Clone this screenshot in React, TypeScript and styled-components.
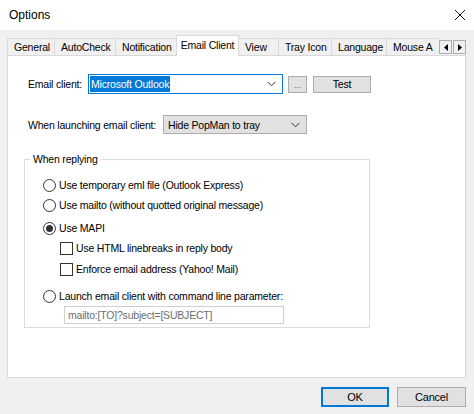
import React from "react";
import styled, { createGlobalStyle } from "styled-components";

const Global = createGlobalStyle`
  html, body { margin: 0; padding: 0; background: #f0f0f0; }
  body { font-family: "Liberation Sans", Arial, sans-serif; font-size: 10.5px; letter-spacing: -0.2px; color: #000; }
  * { box-sizing: border-box; }
`;

const Window = styled.div`
  width: 474px;
  height: 414px;
  display: flex;
  flex-direction: column;
  background: #f0f0f0;
  overflow: hidden;
`;

const TitleBar = styled.div`
  height: 30px;
  background: #fff;
  display: flex;
  align-items: center;
  justify-content: space-between;
  padding: 0 8px 0 9px;
  font-size: 12px;
  letter-spacing: 0;
`;

const Body = styled.div`
  flex: 1;
  display: flex;
  flex-direction: column;
  padding: 5px 8px 0 7px;
`;

const TabStrip = styled.div`
  display: flex;
  align-items: flex-end;
  height: 21px;
  position: relative;
  z-index: 1;
  margin-bottom: -1px;
`;

const TabList = styled.div`
  display: flex;
  align-items: flex-end;
  flex: 1;
  overflow: hidden;
  height: 21px;
`;

const Tab = styled.div<{ $w: number; $active?: boolean }>`
  flex: 0 0 ${(p) => p.$w}px;
  height: ${(p) => (p.$active ? 21 : 18)}px;
  background: ${(p) => (p.$active ? "#fff" : "#f0f0f0")};
  border: 1px solid #d9d9d9;
  border-bottom: ${(p) => (p.$active ? "none" : "1px solid #d9d9d9")};
  margin-left: -1px;
  display: flex;
  align-items: ${(p) => (p.$active ? "flex-start" : "center")};
  padding-top: ${(p) => (p.$active ? 3 : 0)}px;
  justify-content: ${(p) => (p.$active ? "center" : "flex-start")};
  padding-left: ${(p) => (p.$active ? 0 : 6)}px;
  white-space: nowrap;
  overflow: hidden;
  &:first-child { margin-left: 0; }
`;

const Scroller = styled.div`
  display: flex;
  gap: 1px;
  align-self: center;
  margin-top: 3px;
`;

const ScrollBtn = styled.div`
  width: 13px;
  height: 14px;
  background: #f0f0f0;
  border: 1px solid #adadad;
  display: flex;
  align-items: center;
  justify-content: center;
`;

const Panel = styled.div`
  height: 323px;
  background: #fff;
  border: 1px solid #d9d9d9;
  display: flex;
  flex-direction: column;
  padding: 18px 0 0 16px;
`;

const Row = styled.div<{ $mt?: number }>`
  display: flex;
  align-items: center;
  margin-top: ${(p) => p.$mt ?? 0}px;
  padding-left: 4px;
`;

const Label = styled.span<{ $w: number }>`
  width: ${(p) => p.$w}px;
  flex: 0 0 auto;
`;

const Combo = styled.div<{ $w: number; $h: number; $focused?: boolean }>`
  width: ${(p) => p.$w}px;
  height: ${(p) => p.$h}px;
  border: 1px solid ${(p) => (p.$focused ? "#0078d7" : "#adadad")};
  background: ${(p) => (p.$focused ? "#fff" : "#e1e1e1")};
  display: flex;
  align-items: center;
  justify-content: space-between;
  padding: 0 6px 0 ${(p) => (p.$focused ? 1 : 4)}px;
`;

const Selected = styled.span`
  background: #0078d7;
  color: #fff;
  padding: 1px 1px;
  line-height: 14px;
`;

const Button = styled.div<{ $w: number; $h: number; $ml: number; $default?: boolean }>`
  width: ${(p) => p.$w}px;
  height: ${(p) => p.$h}px;
  margin-left: ${(p) => p.$ml}px;
  background: #e1e1e1;
  border: ${(p) => (p.$default ? "2px solid #0078d7" : "1px solid #adadad")};
  display: flex;
  align-items: center;
  justify-content: center;
  font-size: ${(p) => (p.$default !== undefined ? 11 : 10.5)}px;
`;

const Dots = styled.span`
  color: #6d6d6d;
  font-size: 9px;
  margin-top: 2px;
`;

const Group = styled.fieldset`
  margin: 19px 0 0 0;
  width: 346px;
  height: 175px;
  border: 1px solid #dcdcdc;
  padding: 0;
  display: flex;
  flex-direction: column;
`;

const Legend = styled.legend`
  margin-left: 5px;
  padding: 0 3px;
  font-size: 10.5px;
  line-height: 12px;
`;

const Option = styled.div<{ $mt: number; $indent: number }>`
  display: flex;
  align-items: center;
  height: 16px;
  margin-top: ${(p) => p.$mt}px;
  padding-left: ${(p) => p.$indent}px;
  gap: 3px;
  white-space: nowrap;
`;

const Radio = styled.span<{ $checked?: boolean }>`
  width: 13px;
  height: 13px;
  border-radius: 50%;
  border: 1px solid #333;
  background: #fff;
  display: flex;
  align-items: center;
  justify-content: center;
  flex: 0 0 auto;
  &::after {
    content: "";
    width: 7px;
    height: 7px;
    border-radius: 50%;
    background: ${(p) => (p.$checked ? "#333" : "transparent")};
  }
`;

const Check = styled.span`
  width: 13px;
  height: 13px;
  border: 1px solid #333;
  background: #fff;
  flex: 0 0 auto;
`;

const TextInput = styled.div`
  margin: 2px 0 0 39px;
  width: 220px;
  height: 18px;
  border: 1px solid #cfcfcf;
  color: #6d6d6d;
  display: flex;
  align-items: center;
  padding-left: 3px;
`;

const Footer = styled.div`
  display: flex;
  justify-content: flex-end;
  padding-top: 9px;
`;

const Chevron = () => (
  <svg width="9" height="6" viewBox="0 0 9 6">
    <path d="M0.5 0.8 L4.5 4.8 L8.5 0.8" fill="none" stroke="#333" strokeWidth="1" />
  </svg>
);

const tabs = [
  { t: "General", w: 48 },
  { t: "AutoCheck", w: 62 },
  { t: "Notification", w: 62 },
  { t: "Email Client", w: 63, active: true },
  { t: "View", w: 41 },
  { t: "Tray Icon", w: 54 },
  { t: "Language", w: 56 },
  { t: "Mouse A", w: 60 },
];

export default function App() {
  return (
    <Window>
      <Global />
      <TitleBar>
        <span>Options</span>
        <svg width="12" height="12" viewBox="0 0 12 12">
          <path d="M1 1 L11 11 M11 1 L1 11" stroke="#111" strokeWidth="1" />
        </svg>
      </TitleBar>
      <Body>
        <TabStrip>
          <TabList>
            {tabs.map((tb) => (
              <Tab key={tb.t} $w={tb.w} $active={tb.active}>
                {tb.t}
              </Tab>
            ))}
          </TabList>
          <Scroller>
            <ScrollBtn>
              <svg width="4" height="7" viewBox="0 0 4 7">
                <path d="M4 0 L0 3.5 L4 7 Z" fill="#000" />
              </svg>
            </ScrollBtn>
            <ScrollBtn>
              <svg width="4" height="7" viewBox="0 0 4 7">
                <path d="M0 0 L4 3.5 L0 7 Z" fill="#000" />
              </svg>
            </ScrollBtn>
          </Scroller>
        </TabStrip>
        <Panel>
          <Row $mt={0}>
            <Label $w={60}>Email client:</Label>
            <Combo $w={195} $h={20} $focused>
              <Selected>Microsoft Outlook</Selected>
              <Chevron />
            </Combo>
            <Button $w={19} $h={17} $ml={5}>
              <Dots>...</Dots>
            </Button>
            <Button $w={58} $h={17} $ml={6}>
              Test
            </Button>
          </Row>
          <Row $mt={21}>
            <Label $w={135}>When launching email client:</Label>
            <Combo $w={144} $h={19}>
              <span>Hide PopMan to tray</span>
              <Chevron />
            </Combo>
          </Row>
          <Group>
            <Legend>When replying</Legend>
            <Option $mt={12} $indent={18}>
              <Radio />
              <span>Use temporary eml file (Outlook Express)</span>
            </Option>
            <Option $mt={4} $indent={18}>
              <Radio />
              <span>Use mailto (without quotted original message)</span>
            </Option>
            <Option $mt={7} $indent={18}>
              <Radio $checked />
              <span>Use MAPI</span>
            </Option>
            <Option $mt={4} $indent={35}>
              <Check />
              <span>Use HTML linebreaks in reply body</span>
            </Option>
            <Option $mt={5} $indent={35}>
              <Check />
              <span>Enforce email address (Yahoo! Mail)</span>
            </Option>
            <Option $mt={11} $indent={18}>
              <Radio />
              <span>Launch email client with command line parameter:</span>
            </Option>
            <TextInput>mailto:[TO]?subject=[SUBJECT]</TextInput>
          </Group>
        </Panel>
        <Footer>
          <Button $w={68} $h={20} $ml={0} $default>
            OK
          </Button>
          <Button $w={69} $h={20} $ml={8} $default={false}>
            Cancel
          </Button>
        </Footer>
      </Body>
    </Window>
  );
}
